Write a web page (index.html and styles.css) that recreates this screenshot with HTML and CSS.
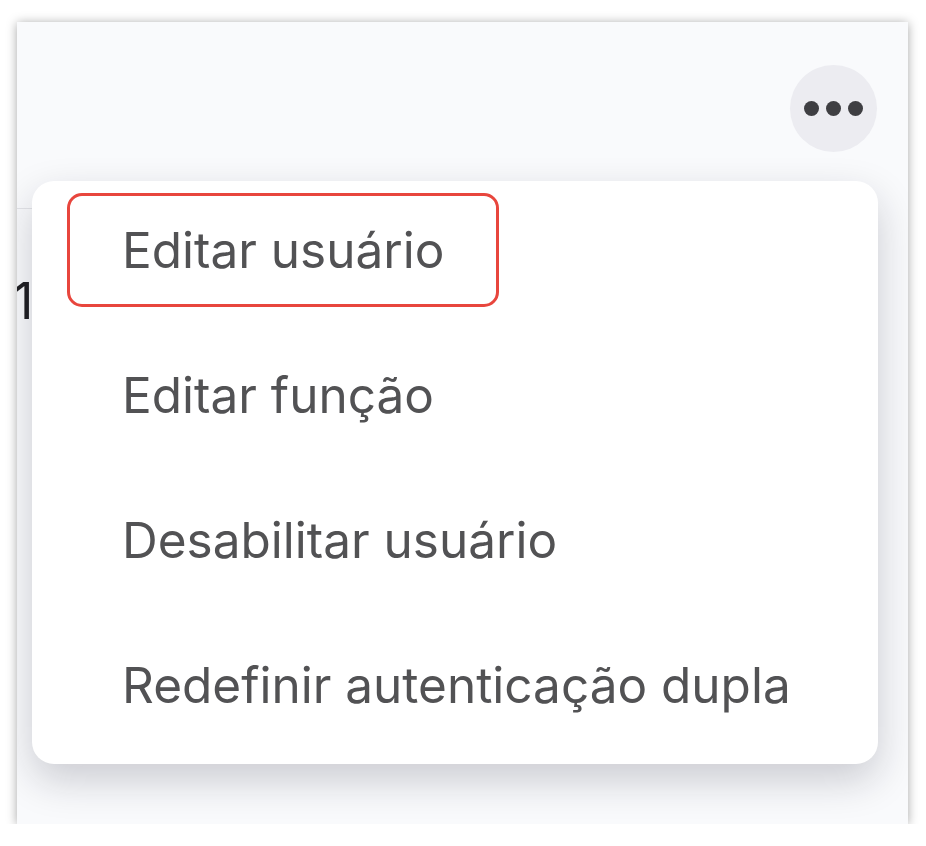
FILE: index.html
```html
<!DOCTYPE html>
<html lang="pt-BR">
<head>
    <meta charset="UTF-8">
    <meta name="viewport" content="width=device-width, initial-scale=1.0">
    <title>Usuários</title>
    <link rel="stylesheet" href="styles.css">
</head>
<body>

    <div class="card">
        <div class="card-head">
            <button class="more-btn" aria-label="Mais ações">
                <span class="dot"></span>
                <span class="dot"></span>
                <span class="dot"></span>
            </button>
        </div>

        <!-- table row behind the dropdown -->
        <div class="table">
            <div class="table-row">10</div>
        </div>

        <!-- Dropdown menu -->
        <div class="menu">
            <a href="#editar-usuario" class="menu-item"><span class="label highlight">Editar usuário</span></a>
            <a href="#editar-funcao" class="menu-item"><span class="label">Editar função</span></a>
            <a href="#desabilitar" class="menu-item"><span class="label">Desabilitar usuário</span></a>
            <a href="#redefinir-2fa" class="menu-item"><span class="label">Redefinir autenticação dupla</span></a>
        </div>
    </div>

</body>
</html>
```

FILE: styles.css
```css
body {
    margin: 0;
    padding: 0;
    background-color: #fff;
    font-family: Inter, "Noto Sans", sans-serif;
    color: #525254;
}
.card {
    position: relative;
    margin: 22px 0 0 17px;
    width: 891px;
    height: 802px;
    background-color: #f9fafc;
    box-shadow: 0 1px 10px rgba(0, 0, 0, 0.35);
    overflow: hidden;
}
.card-head {
    display: flex;
    justify-content: flex-end;
    padding: 43px 31px 0 0;
}
.more-btn {
    width: 87px;
    height: 87px;
    border: none;
    border-radius: 50%;
    background-color: #ececf1;
    display: flex;
    align-items: center;
    justify-content: center;
    gap: 7px;
    padding: 0;
    cursor: pointer;
}
.dot {
    width: 15px;
    height: 15px;
    border-radius: 50%;
    background-color: #3e3e42;
}
.table {
    margin: 56px 30px 0 0;
    border-top: 1px solid #e3e4e8;
}
.table-row {
    padding: 67px 0 0 0;
    margin-left: -4px;
    font-size: 50px;
    line-height: 50px;
    color: #1f1f22;
}
/* Dropdown menu */
.menu {
    position: absolute;
    top: 159px;
    left: 15px;
    right: 30px;
    padding: 0 0 3px 0;
    background-color: #fff;
    border-radius: 22px;
    box-shadow: 0 16px 40px rgba(20, 20, 40, 0.2);
}
.menu-item {
    display: flex;
    align-items: center;
    height: 145px;
    padding-left: 35px;
    text-decoration: none;
    color: #525254;
    font-size: 49.5px;
}
.label {
    display: inline-block;
    padding: 0 52px;
    line-height: 108px;
    border: 3px solid transparent;
    border-radius: 15px;
    margin-top: -7px;
}
.label.highlight {
    border-color: #e8463d;
}
```
